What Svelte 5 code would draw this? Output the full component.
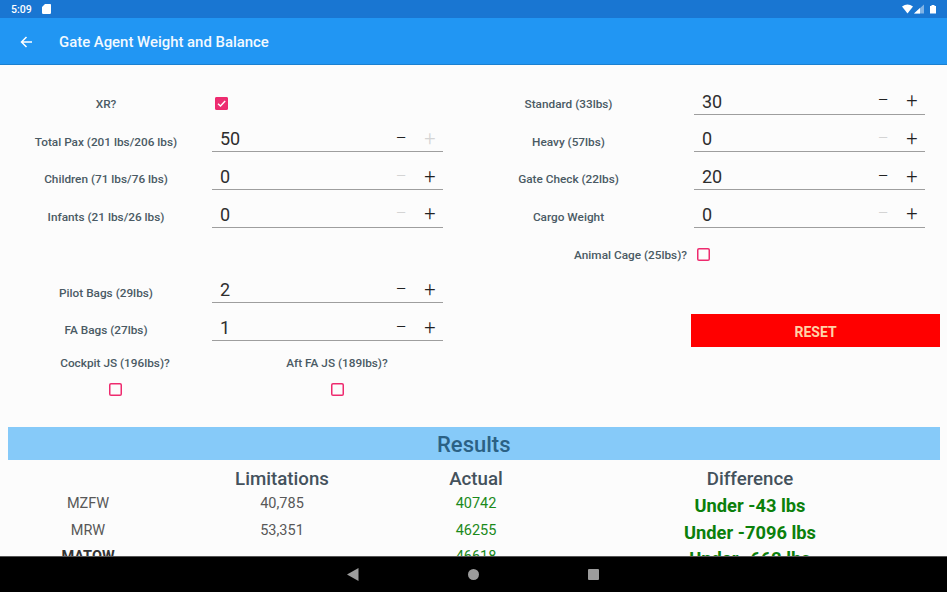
<script lang="ts">
	// Stepper rows for both form columns
	const leftTop = [
		{ label: 'Total Pax (201 lbs/206 lbs)', value: 50, noMinus: false, noPlus: true },
		{ label: 'Children (71 lbs/76 lbs)', value: 0, noMinus: true, noPlus: false },
		{ label: 'Infants (21 lbs/26 lbs)', value: 0, noMinus: true, noPlus: false }
	];
	const leftBags = [
		{ label: 'Pilot Bags (29lbs)', value: 2, noMinus: false, noPlus: false },
		{ label: 'FA Bags (27lbs)', value: 1, noMinus: false, noPlus: false }
	];
	const right = [
		{ label: 'Standard (33lbs)', value: 30, noMinus: false, noPlus: false },
		{ label: 'Heavy (57lbs)', value: 0, noMinus: true, noPlus: false },
		{ label: 'Gate Check (22lbs)', value: 20, noMinus: false, noPlus: false },
		{ label: 'Cargo Weight', value: 0, noMinus: true, noPlus: false }
	];
	const results = [
		{ name: 'MZFW', limit: '40,785', actual: '40742', diff: 'Under -43 lbs' },
		{ name: 'MRW', limit: '53,351', actual: '46255', diff: 'Under -7096 lbs' },
		{ name: 'MATOW', limit: '', actual: '46618', diff: 'Under -662 lbs', bold: true }
	];
</script>

{#snippet stepper(row)}
	<div class="row">
		<span class="label">{row.label}</span>
		<div class="field">
			<span class="value">{row.value}</span>
			<button class="step minus" class:off={row.noMinus}>−</button>
			<button class="step plus" class:off={row.noPlus}>+</button>
		</div>
	</div>
{/snippet}

<div class="screen">
	<div class="status">
		<span class="time">5:09</span>
		<svg class="sd" width="9" height="10" viewBox="0 0 9 10"><path d="M3 0h4.600A1.200 1.200 0 0 1 9 1.200v7.600A1.200 1.200 0 0 1 7.800 10H1.200A1.200 1.200 0 0 1 0 8.800V3z" fill="#fff" /></svg>
		<span class="spacer"></span>
		<svg width="35" height="11" viewBox="0 0 35 11">
			<path d="M0 2.500Q5.500-1.500 11 2.500L5.500 9.500z" fill="#fff" />
			<path d="M12 9.500L22 .5v9z" fill="#fff" opacity=".45" />
			<path d="M12 9.500L18 4v5.500z" fill="#fff" />
			<path d="M28 2h1.500v-1h3v1H34v7.500h-6z" fill="#fff" />
		</svg>
	</div>

	<header class="appbar">
		<svg width="12" height="12" viewBox="0 0 12 12" fill="none" stroke="#fff" stroke-width="1.500"><path d="M12 6H1.500M6.500 1L1.500 6l5 5" /></svg>
		<h1>Gate Agent Weight and Balance</h1>
	</header>

	<main class="content">
		<section class="form">
			<div class="col col-left">
				<div class="row">
					<span class="label">XR?</span>
					<div class="check-cell"><span class="check on"><svg width="11" height="11" viewBox="0 0 11 11" fill="none" stroke="#fff" stroke-width="1.400"><path d="M2 5.700l2.500 2.300 4.700-5" /></svg></span></div>
				</div>
				{#each leftTop as row}
					{@render stepper(row)}
				{/each}
				<div class="row"></div>
				{#each leftBags as row}
					{@render stepper(row)}
				{/each}
				<div class="jumpseats">
					<div class="seat"><span class="seat-label">Cockpit JS (196lbs)?</span><span class="check"></span></div>
					<div class="seat"><span class="seat-label">Aft FA JS (189lbs)?</span><span class="check"></span></div>
				</div>
			</div>

			<div class="col col-right">
				{#each right as row}
					{@render stepper(row)}
				{/each}
				<div class="row">
					<span class="label label-end">Animal Cage (25lbs)?</span>
					<span class="check"></span>
				</div>
				<div class="row"></div>
				<div class="reset-row"><button class="reset">RESET</button></div>
			</div>
		</section>

		<h2 class="results-title">Results</h2>
		<div class="table">
			<span class="head"></span>
			<span class="head">Limitations</span>
			<span class="head">Actual</span>
			<span class="head">Difference</span>
			{#each results as r}
				<span class="cell" class:strong={r.bold}>{r.name}</span>
				<span class="cell">{r.limit}</span>
				<span class="cell green">{r.actual}</span>
				<span class="diff">{r.diff}</span>
			{/each}
		</div>
	</main>

	<nav class="navbar">
		<svg width="12" height="13" viewBox="0 0 12 13"><path d="M11.500 0v13L0 6.500z" fill="#9c9c9c" /></svg>
		<svg width="11" height="11" viewBox="0 0 11 11"><circle cx="5.500" cy="5.500" r="5.500" fill="#9c9c9c" /></svg>
		<svg width="11" height="11" viewBox="0 0 11 11"><rect width="11" height="11" rx="1" fill="#9c9c9c" /></svg>
	</nav>
</div>

<style>
	:global(body) {
		margin: 0;
	}

	.screen {
		width: 947px;
		height: 592px;
		display: flex;
		flex-direction: column;
		overflow: hidden;
		background: #fcfcfc;
		font-family: Roboto, 'Liberation Sans', sans-serif;
	}

	.status {
		height: 18px;
		flex: none;
		display: flex;
		align-items: center;
		padding: 0 10px 0 11px;
		background: #1976d2;
		color: #fff;
	}

	.time {
		font-size: 10.500px;
		font-weight: 500;
	}

	.sd {
		margin-left: 10px;
	}

	.spacer {
		flex: 1;
	}

	.appbar {
		height: 47px;
		flex: none;
		display: flex;
		align-items: center;
		padding: 2px 0 0 20px;
		background: #2196f3;
		box-sizing: border-box;
		border-bottom: 1px solid #1b80d0;
	}

	.appbar h1 {
		margin: 0 0 0 27px;
		font-size: 14.900px;
		font-weight: 500;
		color: #f2f9ff;
	}

	.content {
		flex: 1;
		min-height: 0;
		overflow: hidden;
		padding-top: 20px;
	}

	.form {
		display: flex;
	}

	.col-left {
		width: 443px;
	}

	.col-right {
		width: 504px;
	}

	.col-right .label {
		width: 251px;
	}

	.row {
		height: 37.750px;
		display: flex;
		align-items: center;
	}

	.label {
		width: 212px;
		flex: none;
		text-align: center;
		font-size: 11.800px;
		font-weight: 500;
		color: #4a5a64;
	}

	.col-right .label-end {
		text-align: right;
		padding-right: 7px;
		margin-right: 3px;
		box-sizing: border-box;
	}

	.field {
		width: 231px;
		height: 28px;
		align-self: flex-start;
		margin-top: 1.500px;
		box-sizing: border-box;
		display: flex;
		align-items: center;
		border-bottom: 1px solid #9e9e9e;
		padding-left: 8px;
	}

	.value {
		flex: 1;
		padding-top: 2px;
		font-size: 18px;
		color: #2e2e2e;
	}

	.step {
		padding: 0;
		border: 0;
		background: none;
		font-family: inherit;
		font-size: 20px;
		font-weight: 300;
		line-height: 1;
		color: #222;
		text-align: center;
	}

	.minus {
		width: 32px;
	}

	.plus {
		width: 26px;
	}

	.step.off {
		color: #d4d4d4;
	}

	.check-cell {
		padding-left: 3px;
		display: flex;
	}

	.check {
		width: 13px;
		height: 13px;
		border-radius: 2px;
		box-shadow: inset 0 0 0 1.500px #ee2a6e;
		display: flex;
		align-items: center;
		justify-content: center;
	}

	.check.on {
		background: #ec2f72;
	}

	.jumpseats {
		display: grid;
		grid-template-columns: 222px 222px;
		padding-left: 4px;
		margin-top: 7px;
	}

	.seat {
		display: flex;
		flex-direction: column;
		align-items: center;
		gap: 13px;
	}

	.seat-label {
		font-size: 11.800px;
		font-weight: 500;
		color: #4a5a64;
	}

	.reset-row {
		margin-top: 2.500px;
		padding-left: 248px;
	}

	.reset {
		display: block;
		width: 249px;
		height: 33px;
		border: 0;
		padding: 2px 0 0;
		background: #ff0000;
		color: #ffd2a8;
		font-family: inherit;
		font-size: 14px;
		font-weight: 700;
	}

	.results-title {
		height: 33px;
		margin: 31px 7px 0 7.500px;
		background: #86caf9;
		color: #2b6185;
		font-size: 22px;
		font-weight: 500;
		line-height: 36px;
		text-align: center;
	}

	.table {
		display: grid;
		grid-template-columns: 160px 228px 160px 388px;
		grid-auto-rows: 26.500px;
		padding: 5px 0 0 8px;
		align-items: center;
		text-align: center;
	}

	.head {
		font-size: 18.700px;
		font-weight: 500;
		color: #44525c;
	}

	.cell {
		padding-bottom: 3px;
		font-size: 14.500px;
		color: #585858;
	}

	.cell.strong {
		font-weight: 700;
		color: #333;
	}

	.cell.green {
		color: #1b8a1b;
	}

	.diff {
		padding-top: 1px;
		font-size: 18.300px;
		font-weight: 700;
		color: #0b800b;
	}

	.navbar {
		height: 36px;
		flex: none;
		display: flex;
		align-items: center;
		background: #000;
		border-top: 1px solid #555;
		box-sizing: border-box;
		padding-left: 347px;
		gap: 109px;
	}
</style>
